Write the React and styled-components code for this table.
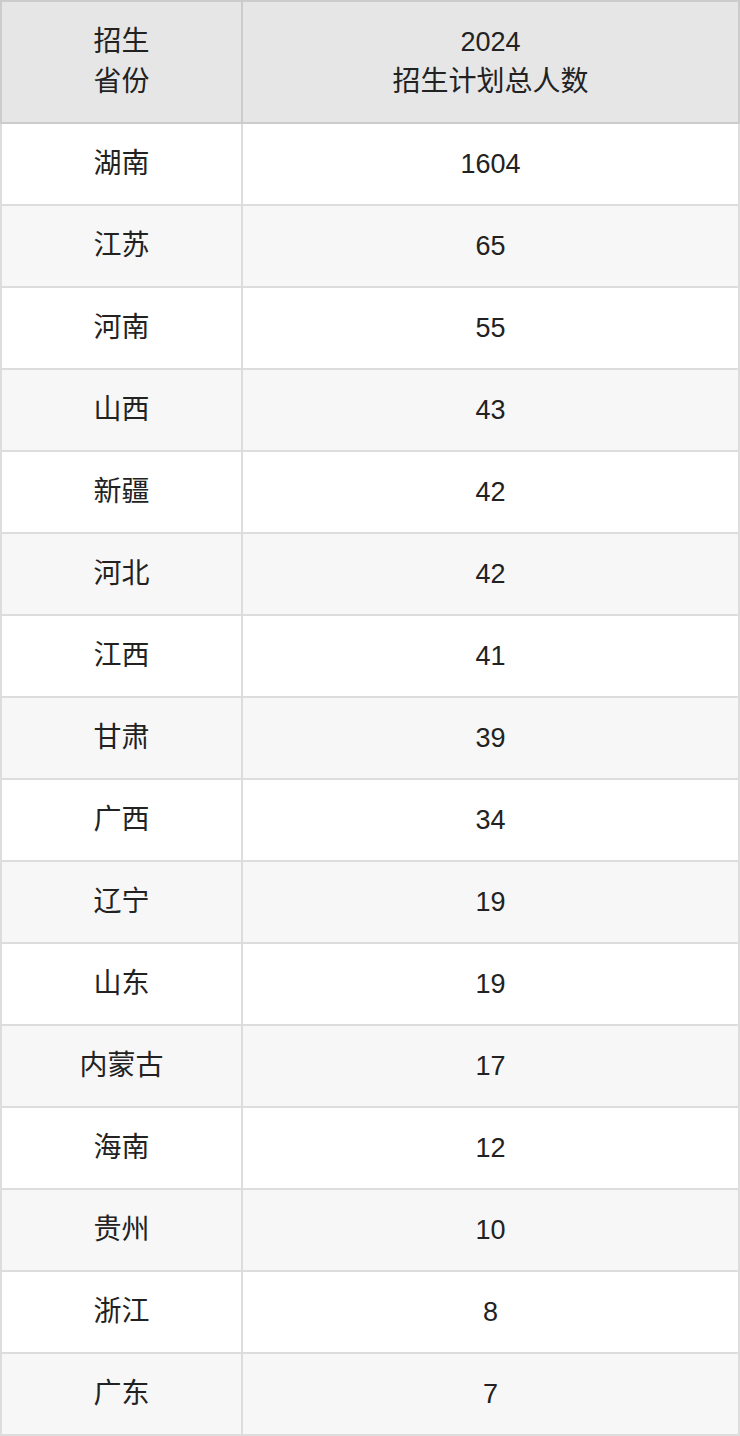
import styled, { createGlobalStyle } from "styled-components";

const GlobalStyle = createGlobalStyle`
  html, body {
    margin: 0;
    padding: 0;
    background: #fff;
  }
  body {
    font-family: "Liberation Sans", Arial, "Noto Sans CJK SC", sans-serif;
  }
`;

const Table = styled.table`
  width: 740px;
  border-collapse: collapse;
  table-layout: fixed;
  color: #222;
  font-size: 27px;
  text-align: center;
`;

const HeadCell = styled.th`
  background: #e6e6e6;
  border: 2px solid #cccccc;
  font-weight: normal;
  line-height: 40px;
  height: 120px;
  padding: 0;
`;

const Row = styled.tr`
  background: ${(p) => (p.$striped ? "#f7f7f7" : "#ffffff")};
`;

const Cell = styled.td`
  border: 2px solid #dddddd;
  height: 80px;
  padding: 0;
  line-height: 40px;
`;

const Cjk = styled.span`
  font-size: 28px;
`;

const rows = [
  ["湖南", 1604],
  ["江苏", 65],
  ["河南", 55],
  ["山西", 43],
  ["新疆", 42],
  ["河北", 42],
  ["江西", 41],
  ["甘肃", 39],
  ["广西", 34],
  ["辽宁", 19],
  ["山东", 19],
  ["内蒙古", 17],
  ["海南", 12],
  ["贵州", 10],
  ["浙江", 8],
  ["广东", 7],
];

const App = () => {
  return (
    <>
      <GlobalStyle />
      <Table>
        <colgroup>
          <col style={{ width: "241px" }} />
          <col />
        </colgroup>
        <thead>
          <tr>
            <HeadCell>
              <Cjk>招生</Cjk>
              <br />
              <Cjk>省份</Cjk>
            </HeadCell>
            <HeadCell>
              2024
              <br />
              <Cjk>招生计划总人数</Cjk>
            </HeadCell>
          </tr>
        </thead>
        <tbody>
          {rows.map(([province, count], i) => (
            <Row key={province} $striped={i % 2 === 1}>
              <Cell>
                <Cjk>{province}</Cjk>
              </Cell>
              <Cell>{count}</Cell>
            </Row>
          ))}
        </tbody>
      </Table>
    </>
  );
};

export default App;
